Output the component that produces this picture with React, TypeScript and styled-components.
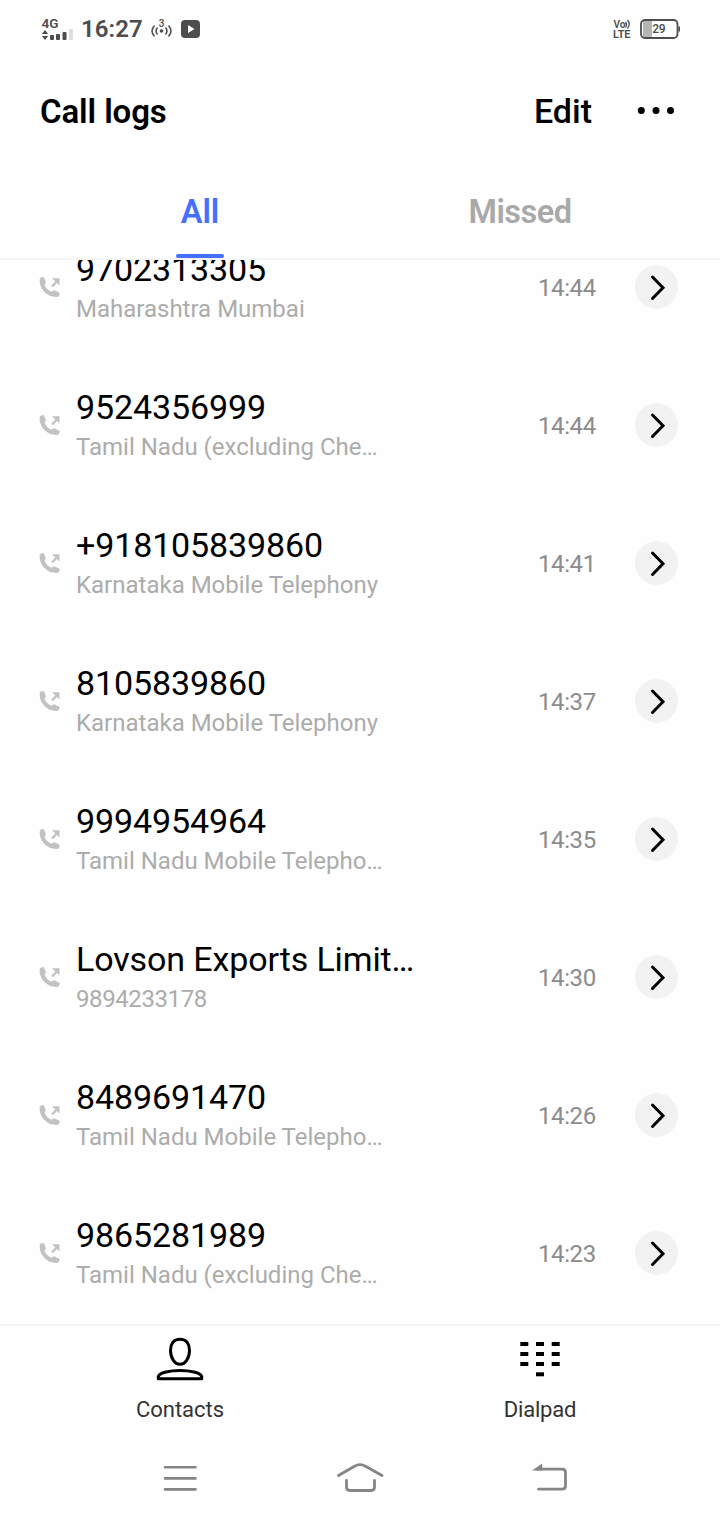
import React from "react";
import styled, { createGlobalStyle } from "styled-components";

const GlobalStyle = createGlobalStyle`
  *, *::before, *::after { box-sizing: border-box; }
  body { margin: 0; background: #fefefe; font-family: Roboto, "Noto Sans", sans-serif; }
  svg { display: block; overflow: visible; }
`;

const Screen = styled.main`
  display: flex;
  flex-direction: column;
  width: 720px;
  height: 1520px;
  overflow: hidden;
  background: #fefefe;
  color: #000;
`;

const StatusBar = styled.div`
  display: flex;
  align-items: center;
  justify-content: space-between;
  height: 58px;
  padding: 0 40px 0 41px;
  color: #4d4d4d;
`;

const StatusGroup = styled.div<{ $gap: number }>`
  display: flex;
  align-items: center;
  gap: ${(p) => p.$gap}px;
`;

const Clock = styled.span`
  width: 62px;
  font-size: 24px;
  line-height: 28px;
  font-weight: 600;
  letter-spacing: 0.1px;
`;

const Header = styled.header`
  display: flex;
  align-items: center;
  height: 106px;
  padding: 0 44px 0 40px;
`;

const Title = styled.h1`
  flex: 1;
  margin: 0;
  padding-top: 2px;
  font-size: 33px;
  line-height: 38px;
  font-weight: 600;
  letter-spacing: -0.1px;
`;

const EditButton = styled.button`
  margin: 0 44px 0 0;
  padding: 0;
  border: 0;
  background: none;
  font: 500 34px/38px Roboto, sans-serif;
  color: #000;
`;

const Tabs = styled.nav`
  display: flex;
  height: 96px;
  padding: 0 40px;
  border-bottom: 2px solid #f6f6f6;
`;

const Tab = styled.div<{ $active?: boolean }>`
  flex: 1;
  display: flex;
  flex-direction: column;
  align-items: center;
  justify-content: space-between;
  padding-top: 29px;
  font-size: 32.5px;
  line-height: 38px;
  font-weight: 600;
  letter-spacing: ${(p) => (p.$active ? "-0.1px" : "-0.5px")};
  color: ${(p) => (p.$active ? "#456fff" : "#a9a9a9")};
`;

const Indicator = styled.span`
  width: 48px;
  height: 4px;
  border-radius: 2px;
  background: #456fff;
`;

const List = styled.ul`
  display: flex;
  flex-direction: column;
  justify-content: flex-end;
  height: 1064px;
  margin: 0;
  padding: 0 42px 2px 39px;
  list-style: none;
  overflow: hidden;
`;

const Row = styled.li`
  flex: none;
  display: flex;
  align-items: center;
  height: 138px;
`;

const Details = styled.div`
  flex: 1;
  min-width: 0;
  margin-left: 15px;
  padding-bottom: 2px;
`;

const Caller = styled.div`
  font-size: 34px;
  line-height: 40px;
  letter-spacing: -0.12px;
  white-space: nowrap;
`;

const Region = styled.div<{ $numeric: boolean }>`
  font-size: 24px;
  line-height: 28px;
  margin-top: 6px;
  letter-spacing: ${(p) => (p.$numeric ? "-0.4px" : "0")};
  color: #acacac;
  white-space: nowrap;
`;

const Time = styled.time`
  width: 59px;
  margin-right: 38px;
  padding-top: 2px;
  font-size: 24px;
  line-height: 28px;
  letter-spacing: -0.4px;
  color: #8c8c8c;
`;

const InfoButton = styled.button`
  display: flex;
  align-items: center;
  justify-content: center;
  width: 43px;
  height: 44px;
  padding: 0;
  border: 0;
  border-radius: 50%;
  background: #f2f2f2;
`;

const BottomBar = styled.nav`
  display: flex;
  height: 112px;
  border-top: 2px solid #f6f6f6;
`;

const BottomItem = styled.div<{ $tight?: boolean }>`
  flex: 1;
  display: flex;
  flex-direction: column;
  align-items: center;
  padding-top: 11px;
  gap: 11px;
  font-size: 22px;
  line-height: 28px;
  letter-spacing: ${(p) => (p.$tight ? "-0.2px" : "0")};
  color: #333;
`;

const SystemNav = styled.div`
  display: flex;
  align-items: center;
  height: 84px;
`;

const SystemKey = styled.div<{ $left: number }>`
  margin-left: ${(p) => p.$left}px;
`;

const SignalIcon = () => (
  <svg width="32" height="24" viewBox="0 0 32 24" fill="#4d4d4d">
    <text x="0.500" y="10.500" fontFamily="Roboto" fontWeight="600" fontSize="13.500" textLength="17" lengthAdjust="spacingAndGlyphs">4G</text>
    <path d="M4 13l3.200 4H.800zM4 23l-3.200-4h6.400z" />
    <rect x="9" y="18" width="4" height="5" rx="1" />
    <rect x="15" y="17" width="4" height="6" rx="1" />
    <rect x="21.500" y="15" width="4" height="8" rx="1" />
    <rect x="28" y="12" width="4" height="11" rx="1" fill="#dedede" />
  </svg>
);

const HotspotIcon = () => (
  <svg width="21" height="20" viewBox="0 0 21 20" fill="none" stroke="#4d4d4d" strokeWidth="1.500">
    <text x="10.500" y="8" textAnchor="middle" fontFamily="Roboto" fontWeight="500" fontSize="10" fill="#4d4d4d" stroke="none">3</text>
    <circle cx="10.500" cy="12" r="1.800" fill="#4d4d4d" stroke="none" />
    <path d="M6.500 8.500q-3 3.500 0 7M14.500 8.500q3 3.500 0 7M3.500 6.500q-5 5.500 0 11M17.500 6.500q5 5.500 0 11" />
  </svg>
);

const PlayIcon = () => (
  <svg width="20" height="18" viewBox="0 0 20 18">
    <rect x="1" width="19" height="18" rx="4" fill="#4d4d4d" />
    <path d="M8 5l6.500 4L8 13z" fill="#fff" />
  </svg>
);

const VolteIcon = () => (
  <svg width="19" height="20" viewBox="0 0 19 20" fill="#4d4d4d" fontFamily="Roboto" fontWeight="600">
    <text x="0.500" y="9" fontSize="11" textLength="12" lengthAdjust="spacingAndGlyphs">Vo</text>
    <path d="M12.500 3q2 2.500 0 5.500M14.500 1q3.500 4 0 8.500" fill="none" stroke="#4d4d4d" strokeWidth="1.300" />
    <text x="0" y="19" fontSize="11" textLength="17.500" lengthAdjust="spacingAndGlyphs">LTE</text>
  </svg>
);

const BatteryIcon = () => (
  <svg width="40" height="20" viewBox="0 0 40 20">
    <rect x="3" y="2" width="9" height="16" fill="#b5b5b5" />
    <rect x="1" y="1" width="36.500" height="18" rx="4" fill="none" stroke="#4d4d4d" strokeWidth="1.800" />
    <path d="M39.200 7.500v5" stroke="#4d4d4d" strokeWidth="1.600" />
    <text x="12.200" y="14.200" fontFamily="Roboto" fontWeight="500" fontSize="12" textLength="13.500" fill="#4d4d4d">29</text>
  </svg>
);

const MoreIcon = () => (
  <svg width="40" height="10" viewBox="0 0 40 10">
    <circle cx="5.300" cy="4.500" r="3.500" />
    <circle cx="20" cy="4.500" r="3.500" />
    <circle cx="34.500" cy="4.500" r="3.500" />
  </svg>
);

const OutgoingIcon = () => (
  <svg width="22" height="22" viewBox="0 0 22 22" fill="#c2c2c2">
    <path d="M0.600 4.200C0.600 2.200 2.200 1 4.600 1L6.800 5.800Q7 6.500 6.500 7.200L5.500 8.900Q7.500 13.600 12.400 15.700L14.300 14.500Q15 14.200 15.700 14.500L20.800 16.900Q20.600 20.900 17.200 20.900C8 20.900 0.600 13.500 0.600 4.200Z" />
    <path d="M13 2.200h7.500v7.300l-2.500-2.400-4.200 4.100-1.600-1.600 4.200-4.100z" />
  </svg>
);

const ChevronIcon = () => (
  <svg width="43" height="43" viewBox="0 0 43 43" fill="none" stroke="#000" strokeWidth="3" strokeLinecap="round">
    <path d="M17.500 11L28 21.700L17.500 32.500" />
  </svg>
);

const ContactsIcon = () => (
  <svg width="48" height="48" viewBox="0 0 48 48" fill="none" stroke="#000" strokeWidth="3">
    <path d="M24 2.300C17.500 2.300 14.500 7 14.500 13.300C14.500 20.800 18.500 27.300 24 27.300S33.500 20.800 33.500 13.300C33.500 7 30.500 2.300 24 2.300Z" />
    <path d="M2.300 41.800V39.500C5 31.500 43 31.500 45.700 39.500V41.800Z" strokeLinejoin="round" />
  </svg>
);

const DialpadIcon = () => (
  <svg width="48" height="48" viewBox="0 0 48 48">
    {[5, 15, 25].map((y) =>
      [4.3, 20, 35.7].map((x) => <rect key={`${x}-${y}`} x={x} y={y} width="8" height="4" />)
    )}
    <rect x="20" y="35.300" width="8" height="4" />
  </svg>
);

const MenuKeyIcon = () => (
  <svg width="34" height="28" viewBox="0 0 34 28" stroke="#858585" strokeWidth="2.600" strokeLinecap="round">
    <path d="M2 3.300h30.500M2 14.400h30.500M2 25.400h30.500" />
  </svg>
);

const HomeKeyIcon = () => (
  <svg width="48" height="32" viewBox="0 0 48 32" fill="none" stroke="#858585" strokeWidth="2.800" strokeLinecap="round">
    <path d="M2.500 13.500L18.500 4.200Q24 1.200 29.500 4.200L46 13.500M10.500 18.500V25Q10.500 28.500 14 28.500H35Q38.500 28.500 38.500 25V18.500" />
  </svg>
);

const BackKeyIcon = () => (
  <svg width="36" height="30" viewBox="0 0 36 30">
    <path d="M5 6.200H30Q33.500 6.200 33.500 9.700V22.700Q33.500 26.200 30 26.200H6.500" fill="none" stroke="#858585" strokeWidth="2.800" strokeLinecap="round" />
    <path d="M0 7.600L10.200 0.500V7.600Z" fill="#858585" />
  </svg>
);

const calls = [
  { caller: "9702313305", region: "Maharashtra Mumbai", time: "14:44" },
  { caller: "9524356999", region: "Tamil Nadu (excluding Che…", time: "14:44" },
  { caller: "+918105839860", region: "Karnataka Mobile Telephony", time: "14:41" },
  { caller: "8105839860", region: "Karnataka Mobile Telephony", time: "14:37" },
  { caller: "9994954964", region: "Tamil Nadu Mobile Telepho…", time: "14:35" },
  { caller: "Lovson Exports Limit…", region: "9894233178", time: "14:30" },
  { caller: "8489691470", region: "Tamil Nadu Mobile Telepho…", time: "14:26" },
  { caller: "9865281989", region: "Tamil Nadu (excluding Che…", time: "14:23" },
];

export default function App() {
  return (
    <Screen>
      <GlobalStyle />
      <StatusBar>
        <StatusGroup $gap={8}>
          <SignalIcon />
          <Clock>16:27</Clock>
          <HotspotIcon />
          <PlayIcon />
        </StatusGroup>
        <StatusGroup $gap={8}>
          <VolteIcon />
          <BatteryIcon />
        </StatusGroup>
      </StatusBar>
      <Header>
        <Title>Call logs</Title>
        <EditButton>Edit</EditButton>
        <MoreIcon />
      </Header>
      <Tabs>
        <Tab $active>
          All
          <Indicator />
        </Tab>
        <Tab>Missed</Tab>
      </Tabs>
      <List>
        {calls.map((call, i) => (
          <Row key={i}>
            <OutgoingIcon />
            <Details>
              <Caller>{call.caller}</Caller>
              <Region $numeric={/^\d+$/.test(call.region)}>{call.region}</Region>
            </Details>
            <Time>{call.time}</Time>
            <InfoButton aria-label="Details">
              <ChevronIcon />
            </InfoButton>
          </Row>
        ))}
      </List>
      <BottomBar>
        <BottomItem>
          <ContactsIcon />
          Contacts
        </BottomItem>
        <BottomItem $tight>
          <DialpadIcon />
          Dialpad
        </BottomItem>
      </BottomBar>
      <SystemNav>
        <SystemKey $left={163}><MenuKeyIcon /></SystemKey>
        <SystemKey $left={139}><HomeKeyIcon /></SystemKey>
        <SystemKey $left={148}><BackKeyIcon /></SystemKey>
      </SystemNav>
    </Screen>
  );
}
